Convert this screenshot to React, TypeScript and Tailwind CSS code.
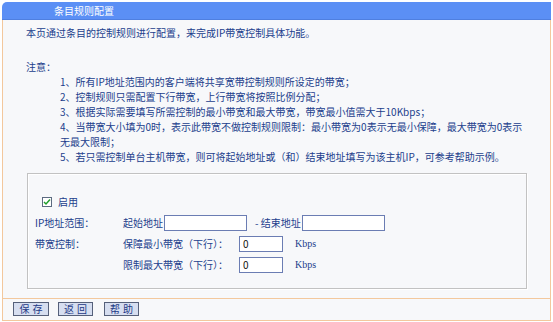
import React from "react";

const notes = [
  "1、所有IP地址范围内的客户端将共享宽带控制规则所设定的带宽；",
  "2、控制规则只需配置下行带宽，上行带宽将按照比例分配；",
  "3、根据实际需要填写所需控制的最小带宽和最大带宽，带宽最小值需大于10Kbps；",
  "4、当带宽大小填为0时，表示此带宽不做控制规则限制：最小带宽为0表示无最小保障，最大带宽为0表示",
  "无最大限制；",
  "5、若只需控制单台主机带宽，则可将起始地址或（和）结束地址填写为该主机IP，可参考帮助示例。",
];

const TextInput: React.FC<{ w: string; value?: string }> = ({ w, value }) => (
  <input
    readOnly
    value={value ?? ""}
    className={`${w} h-[16px] border border-[#6b7db3] bg-white px-[3px] text-[10px] leading-[14px] text-[#111] outline-none`}
  />
);

const Button: React.FC<{ label: string; w: string }> = ({ label, w }) => (
  <button
    className={`${w} h-[14px] border border-[#55607a] bg-[#d6def0] text-[10px] leading-[12px] text-[#1f3a86] tracking-[3px] pl-[3px]`}
  >
    {label}
  </button>
);

const App: React.FC = () => {
  return (
    <div
      className="w-[553px] h-[322px] bg-white pt-[2px] pl-[2px] text-[10px] text-[#223e8c]"
      style={{ fontFamily: '"Noto Sans CJK SC", "Noto Sans", sans-serif' }}
    >
      <div className="w-[549px]">
        <div className="h-[18px] rounded-tl-[5px] bg-[#5b8ff5] border-b border-[#4f7fe0] pl-[52px] flex items-center text-white text-[10px]">
          条目规则配置
        </div>
        <div className="h-[278px] border-l border-r border-[#f3c89d] bg-[#f7f8fa] pt-[5px]">
          <div className="pl-[23px] leading-[15px]">本页通过条目的控制规则进行配置，来完成IP带宽控制具体功能。</div>
          <div className="pl-[23px] leading-[15px] mt-[19px]">注意：</div>
          <div className="pl-[57px] leading-[15px]">
            {notes.map((n) => (
              <div key={n}>{n}</div>
            ))}
          </div>
          <div className="ml-[24px] mt-[9px] w-[500px] h-[116px] border border-[#c2c2c2] shadow-[inset_1px_1px_0_#ffffff,1px_1px_0_#ffffff] pt-[17px] pl-[7px]">
            <div className="h-[21px] flex items-center">
              <span className="w-[10px] h-[10px] ml-[7px] border border-[#5c6b80] bg-white flex items-center justify-center">
                <svg width="8" height="8" viewBox="0 0 8 8">
                  <path d="M1 4 L3 6 L7 1.5" stroke="#1f9e2b" strokeWidth="1.5" fill="none" />
                </svg>
              </span>
              <span className="ml-[6px]">启用</span>
            </div>
            <div className="h-[21px] flex items-center">
              <span className="w-[88px]">IP地址范围：</span>
              <span className="mr-[1px]">起始地址</span>
              <TextInput w="w-[83px]" />
              <span className="ml-[8px] mr-[1px]">-&nbsp;结束地址</span>
              <TextInput w="w-[83px]" />
            </div>
            <div className="h-[21px] flex items-center">
              <span className="w-[88px]">带宽控制：</span>
              <span className="w-[116px]">保障最小带宽（下行）：</span>
              <TextInput w="w-[44px]" value="0" />
              <span className="ml-[12px]" style={{ fontFamily: '"Liberation Serif", serif' }}>
                Kbps
              </span>
            </div>
            <div className="h-[21px] flex items-center">
              <span className="w-[88px]" />
              <span className="w-[116px]">限制最大带宽（下行）：</span>
              <TextInput w="w-[44px]" value="0" />
              <span className="ml-[12px]" style={{ fontFamily: '"Liberation Serif", serif' }}>
                Kbps
              </span>
            </div>
          </div>
        </div>
        <div className="h-[23px] border border-[#f3c89d] bg-[#f7f8fa] flex items-center pl-[10px] pb-[2px]">
          <Button label="保存" w="w-[36px]" />
          <span className="w-[9px]" />
          <Button label="返回" w="w-[35px]" />
          <span className="w-[11px]" />
          <Button label="帮助" w="w-[35px]" />
        </div>
      </div>
    </div>
  );
};

export default App;
